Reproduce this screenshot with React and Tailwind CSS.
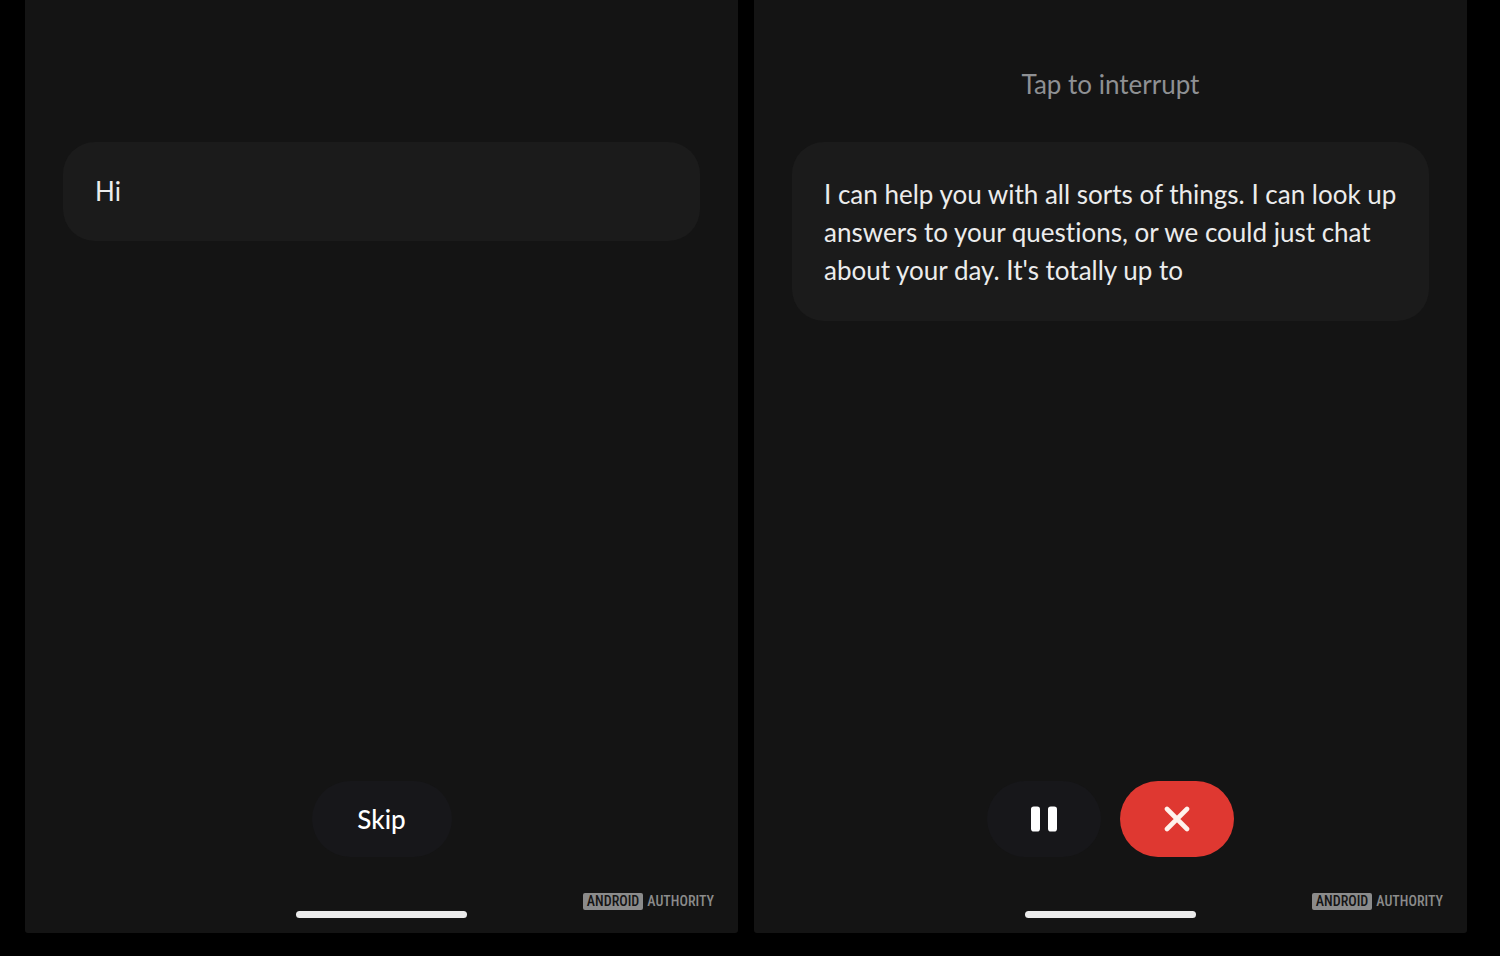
function PauseIcon() {
    return (
        <svg width="28" height="26" viewBox="0 0 28 26" fill="currentColor" aria-hidden="true">
            <rect x="1" y="0.5" width="9" height="25" rx="2.8" />
            <rect x="18" y="0.5" width="9" height="25" rx="2.8" />
        </svg>
    );
}

function CloseIcon() {
    return (
        <svg width="26" height="26" viewBox="0 0 26 26" fill="none" stroke="currentColor" strokeWidth="4.6" strokeLinecap="round" aria-hidden="true">
            <path d="M3 3l20 20M23 3L3 23" />
        </svg>
    );
}

function Watermark() {
    return (
        <div className="absolute right-6 bottom-[23px] flex items-center gap-1 font-['Roboto_Condensed','Liberation_Sans_Narrow','Roboto',sans-serif] text-[14px] leading-[17px] font-medium text-[#8b8b8b]">
            <span className="rounded-[2px] bg-[#8b8b8b] px-1 text-[#141414]">ANDROID</span>
            <span>AUTHORITY</span>
        </div>
    );
}

function Screen({ hint, message, children }) {
    return (
        <section className="relative flex flex-1 flex-col items-center rounded-b-[3px] bg-[#141414] px-[38px] pb-[15px]">
            {/* Status hint */}
            <p className="mt-[65px] h-[38px] text-[26px] leading-[38px] text-[#8e9093]">{hint}</p>

            {/* Transcript bubble */}
            <div className="mt-[39px] w-full rounded-[32px] bg-[#1b1b1b] px-8 text-[26px] leading-[38px] text-[#ececec]">
                {message}
            </div>

            {/* Controls */}
            <div className="mt-auto flex gap-[19px]">{children}</div>

            {/* Home indicator */}
            <div className="mt-[54px] h-[7px] w-[171px] rounded-full bg-[#ebebeb]" />

            <Watermark />
        </section>
    );
}

export default function App() {
    return (
        <main className="flex min-h-screen gap-4 bg-black pr-[33px] pb-[23px] pl-[25px] font-['Lato',sans-serif] [font-variant-ligatures:none]">
            <Screen message={<p className="pt-[30px] pb-[31px]">Hi</p>}>
                <button className="h-[76px] w-[140px] rounded-full bg-[#17171a] text-[26px] font-medium text-white">
                    Skip
                </button>
            </Screen>

            <Screen
                hint="Tap to interrupt"
                message={
                    <p className="pt-[33px] pb-8">
                        I can help you with all sorts of things. I can look up answers to your questions, or we could just chat about your day. It's totally up to
                    </p>
                }
            >
                <button aria-label="Pause" className="flex h-[76px] w-[114px] items-center justify-center rounded-full bg-[#17171a] text-white">
                    <PauseIcon />
                </button>
                <button aria-label="Close" className="flex h-[76px] w-[114px] items-center justify-center rounded-full bg-[#df3831] text-[#fff3ec]">
                    <CloseIcon />
                </button>
            </Screen>
        </main>
    );
}
